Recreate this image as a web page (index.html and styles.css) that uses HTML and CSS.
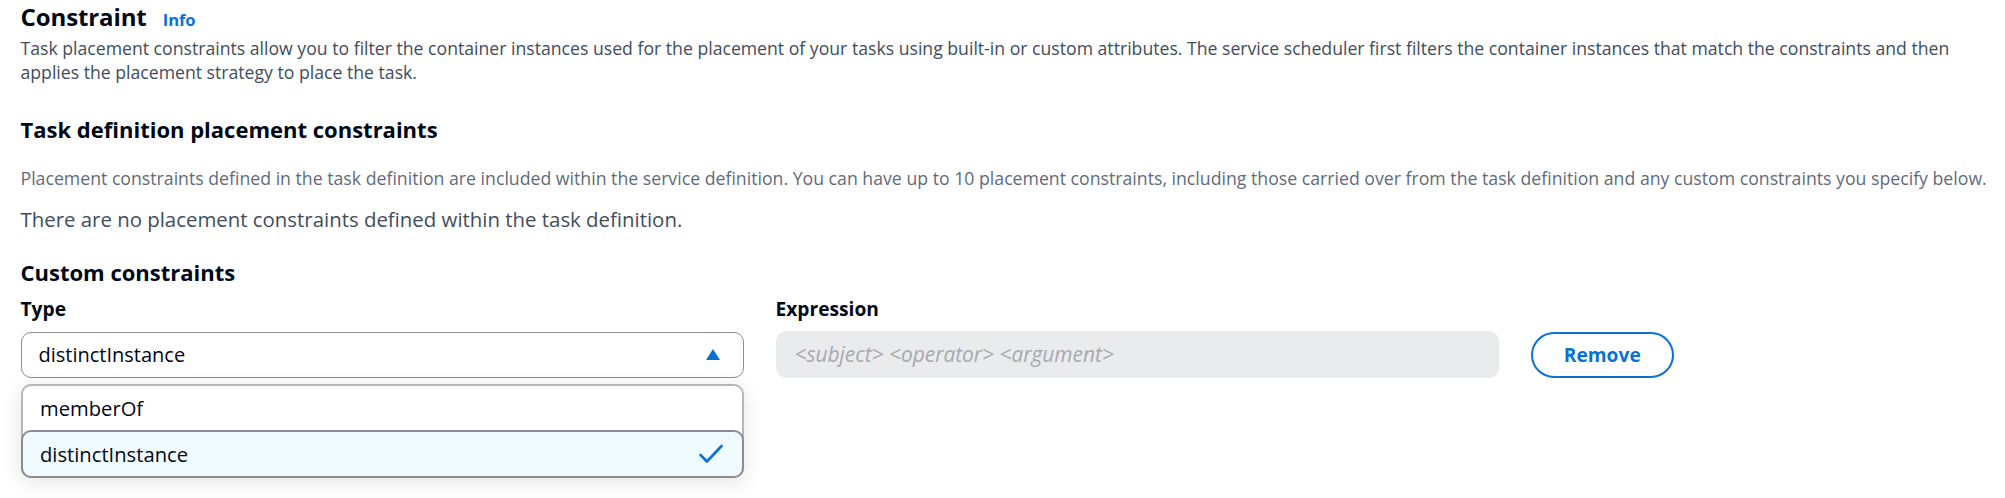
FILE: index.html
```html
<!DOCTYPE html>
<html lang="en">
<head>
<meta charset="utf-8">
<title>Constraint</title>
<link rel="stylesheet" href="styles.css">
</head>
<body>
<section class="page">
  <h2 class="title">Constraint <a class="info" href="#">Info</a></h2>
  <p class="desc">Task placement constraints allow you to filter the container instances used for the placement of your tasks using built-in or custom attributes. The service scheduler first filters the container instances that match the constraints and then applies the placement strategy to place the task.</p>

  <h3 class="sub sub-first">Task definition placement constraints</h3>
  <p class="hint">Placement constraints defined in the task definition are included within the service definition. You can have up to 10 placement constraints, including those carried over from the task definition and any custom constraints you specify below.</p>
  <p class="empty">There are no placement constraints defined within the task definition.</p>

  <h3 class="sub sub-custom">Custom constraints</h3>
  <div class="row">
    <div class="field">
      <div class="label">Type</div>
      <div class="select-wrap">
        <div class="select">
          <span class="select-value">distinctInstance</span>
          <svg class="caret" width="14" height="11" viewBox="0 0 14 11"><polygon points="7,0 14,11 0,11" fill="#0972d3"/></svg>
        </div>
        <ul class="menu">
          <li class="option">memberOf</li>
          <li class="option option-selected">distinctInstance
            <svg class="check" width="24" height="20" viewBox="0 0 24 20"><polyline points="1.5,11 8,17.5 22.5,2" fill="none" stroke="#0972d3" stroke-width="2.6" stroke-linecap="round" stroke-linejoin="round"/></svg>
          </li>
        </ul>
      </div>
    </div>
    <div class="field">
      <div class="label">Expression</div>
      <div class="input">&lt;subject&gt; &lt;operator&gt; &lt;argument&gt;</div>
    </div>
    <button class="btn" type="button">Remove</button>
  </div>
</section>
</body>
</html>
```
FILE: styles.css
```css
* { box-sizing: border-box; }
html, body { margin: 0; padding: 0; background: #ffffff; }
body {
  min-height: 498px;
  font-family: "Open Sans", "Noto Sans", sans-serif;
  color: #000716;
}

.page { padding: 2px 10px 0 20.5px; min-height: 498px; }

.title {
  margin: 0;
  font-size: 24px;
  line-height: 30px;
  font-weight: 700;
  color: #000716;
  letter-spacing: -0.1px;
}
.info {
  margin-left: 10px;
  font-size: 16.6px;
  line-height: 1;
  font-weight: 700;
  color: #0972d3;
  text-decoration: none;
}

.desc {
  margin: 3.5px 0 0;
  font-size: 17.65px;
  line-height: 24px;
  color: #414d5c;
}

.sub {
  margin: 0;
  font-size: 22px;
  line-height: 28px;
  font-weight: 700;
  color: #000716;
}
.sub-first { margin-top: 31.5px; }
.sub-custom { margin-top: 25.5px; }

.hint {
  margin: 23px 0 0;
  font-size: 17.7px;
  line-height: 24px;
  color: #5f6b7a;
}
.empty {
  margin: 16px 0 0;
  font-size: 20.4px;
  line-height: 26px;
  color: #414d5c;
}

.row {
  display: flex;
  align-items: flex-end;
  gap: 31.5px;
  margin-top: 11px;
}
.field { width: 723.5px; }
.label {
  font-size: 19.2px;
  line-height: 24px;
  font-weight: 700;
  color: #000716;
  margin-bottom: 10.5px;
}

.select-wrap { position: relative; }
.select {
  height: 46px;
  border: 1px solid #8c8c94;
  border-radius: 10px;
  padding: 0 23px 0 17px;
  display: flex;
  align-items: center;
  justify-content: space-between;
  font-size: 20px;
  color: #000716;
  background: #ffffff;
}
.select-value { line-height: 26px; }
.caret { display: block; margin-top: -1px; }

.menu {
  position: absolute;
  top: 52.3px;
  left: 0;
  width: 100%;
  margin: 0;
  padding: 0;
  list-style: none;
  background: #ffffff;
  border: 2px solid #b4b6bb;
  border-radius: 10px;
  box-shadow: 0 4px 20px 1px rgba(0, 7, 22, 0.10);
  z-index: 5;
}
.option {
  height: 44px;
  padding: 0 17px 0 17.5px;
  display: flex;
  align-items: center;
  justify-content: space-between;
  font-size: 20.2px;
  color: #000716;
}
.option-selected {
  height: 48px;
  margin: 0 -2px -2px;
  padding: 0 19px 0 17.5px;
  background: #f0fbff;
  border: 2.5px solid #8c8c94;
  border-radius: 10px;
}
.check { display: block; }

.input {
  height: 47px;
  margin-top: -0.5px;
  border-radius: 10px;
  background: #e9ebed;
  padding: 0 19px;
  display: flex;
  align-items: center;
  font-size: 20.9px;
  font-style: italic;
  color: #a7a9b0;
}

.btn {
  width: 143.5px;
  height: 46px;
  margin: 0;
  padding: 0;
  border: 2px solid #0972d3;
  border-radius: 23px;
  background: #ffffff;
  color: #0972d3;
  font-family: "Open Sans", "Noto Sans", sans-serif;
  font-size: 19.2px;
  font-weight: 700;
}
```
